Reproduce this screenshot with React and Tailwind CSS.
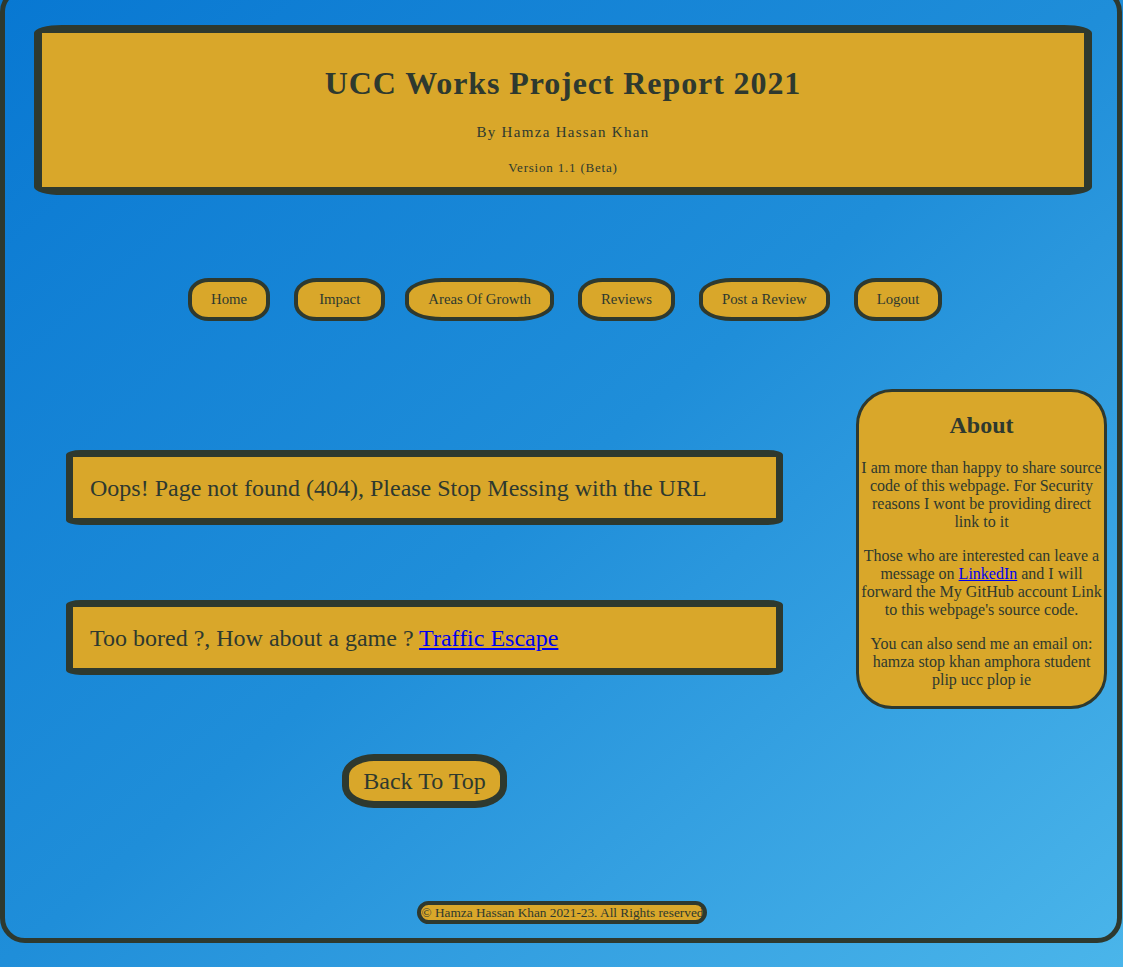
const navItems = ["Home", "Impact", "Areas Of Growth", "Reviews", "Post a Review", "Logout"];

function NavButton({ label, wide }) {
  return (
    <a className={`flex h-[43px] items-center rounded-[25%/40%] border-4 border-[#2e392f] bg-[#d9a72a] text-[14.8px] text-[#2e392f] ${wide ? "px-[21px]" : "px-[19px]"}`}>
      {label}
    </a>
  );
}

function MessageBox({ children, className = "" }) {
  return (
    <div className={`flex h-[75px] w-[717px] items-center rounded-[15px/5px] border-[7px] border-[#2e392f] bg-[#d9a72a] pl-[17px] text-[24px] text-[#2e392f] ${className}`}>
      <p>{children}</p>
    </div>
  );
}

export default function App() {
  return (
    <div className="min-h-screen overflow-hidden bg-linear-to-br from-[#0878d2] via-[#1f8ed9] to-[#4ab5ea] font-['Liberation_Serif',serif] text-[#2e392f]">
      <div className="-mt-[13px] mr-[1px] flex h-[956px] flex-col rounded-[25px] border-[5px] border-[#2e392f]">
        <header className="ml-[29px] mr-[25px] mt-[33px] flex h-[170px] flex-col items-center rounded-[28px/8px] border-8 border-[#2e392f] bg-[#d9a72a]">
          <h1 className="mt-[30px] text-[32px] font-bold leading-[40px] tracking-[0.9px]">UCC Works Project Report 2021</h1>
          <p className="mt-[18px] text-[15px] tracking-[1.3px]">By Hamza Hassan Khan</p>
          <p className="mt-[14px] text-[13px] tracking-[0.8px]">Version 1.1 (Beta)</p>
        </header>

        <nav className="ml-[183px] mt-[83px] flex">
          {navItems.map((n, i) => (
            <div key={n} className={i === 0 ? "" : i === 2 ? "ml-[20px]" : "ml-[24px]"}>
              <NavButton label={n} wide={i === 1} />
            </div>
          ))}
        </nav>

        <main className="mt-[68px] flex">
          <div className="flex w-[839px] flex-col items-center">
            <MessageBox className="mt-[61px]">Oops! Page not found (404), Please Stop Messing with the URL</MessageBox>
            <MessageBox className="mt-[75px]">
              Too bored ?, How about a game ? <a className="text-[#0000ee] underline">Traffic Escape</a>
            </MessageBox>
            <button className="mt-[79px] h-[54px] rounded-[32px/22px] border-[7px] border-[#2e392f] bg-[#d9a72a] px-[14px] text-[24px] text-[#2e392f]">
              Back To Top
            </button>
          </div>
          <aside className="ml-[12px] h-[320px] w-[251px] rounded-[36px] border-[3px] border-[#2e392f] bg-[#d9a72a] px-[2px] text-center text-[16px] leading-[18px]">
            <h2 className="mt-[18px] text-[24px] font-bold leading-[30px]">About</h2>
            <p className="mt-[19px]">
              I am more than happy to share source code of this webpage. For Security reasons I wont be providing direct link to it
            </p>
            <p className="mt-[16px]">
              Those who are interested can leave a message on <a className="text-[#0000ee] underline">LinkedIn</a> and I will forward the My GitHub account Link to this webpage's source code.
            </p>
            <p className="mt-[16px]">You can also send me an email on: hamza stop khan amphora student plip ucc plop ie</p>
          </aside>
        </main>

        <footer className="mt-auto mb-[14px] flex justify-center pl-[2px]">
          <p className="h-[23px] whitespace-nowrap rounded-full border-4 border-[#2e392f] bg-[#d9a72a] pl-[1px] text-[13.3px] leading-[15px]">
            © Hamza Hassan Khan 2021-23. All Rights reserved
          </p>
        </footer>
      </div>
    </div>
  );
}
